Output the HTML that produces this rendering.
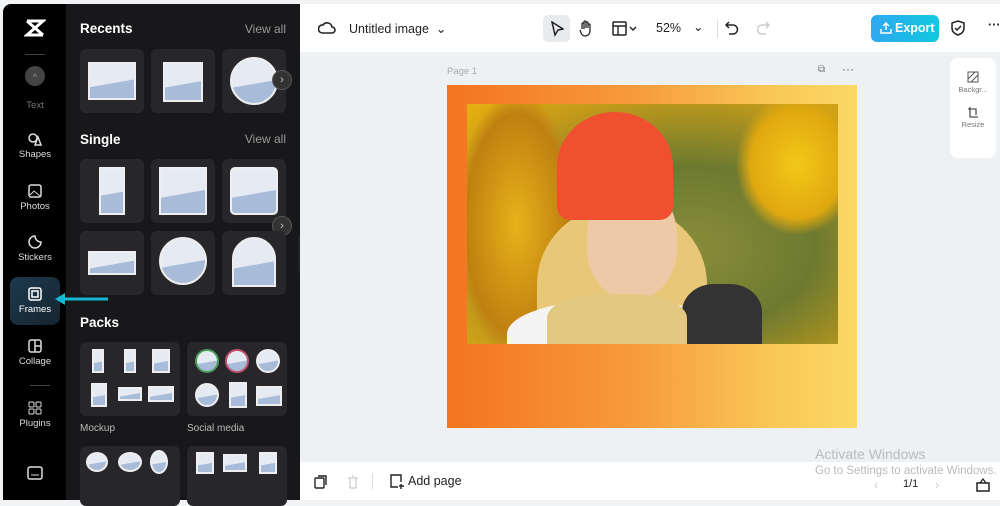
<!DOCTYPE html>
<html><head><meta charset="utf-8"><style>
*{box-sizing:border-box;margin:0;padding:0}
body{width:1000px;height:500px;overflow:hidden;background:#f2f3f5;font-family:"Liberation Sans",sans-serif;position:relative}
.rail{position:absolute;left:3px;top:4px;width:64px;height:496px;background:#000;border-radius:8px 0 0 0}
.panel{position:absolute;left:66px;top:4px;width:234px;height:496px;background:#18181b}
.ri{position:absolute;left:0;width:64px;text-align:center;color:#ddd;font-size:9.5px}
.ri svg{display:block;margin:0 auto 3px}
.h{position:absolute;left:14px;color:#fff;font-weight:bold;font-size:13.5px}
.va{position:absolute;right:14px;color:#999;font-size:12px}
.t{position:absolute;width:64px;height:64px;background:#27272b;border-radius:6px}
.img{position:absolute;background:linear-gradient(170deg,#e6ebf3 0 55%,#a8bcda 56%);border:2px solid #eee}
.arrow{position:absolute;left:55px;top:292px}
.main{position:absolute;left:300px;top:4px;width:700px;height:496px;background:#eef1f4}
.top{position:absolute;left:0;top:0;width:700px;height:48px;background:#fff}
.bot{position:absolute;left:0;top:458px;width:700px;height:38px;background:#fff}
.txt{position:absolute;font-size:12.5px;color:#222}
</style></head><body>
<div class="rail">
 <div class="ri" style="top:14px"><svg width="22" height="20" viewBox="0 0 22 20"><path d="M3 3h16L3 17h16M3 3l16 14" stroke="#fff" stroke-width="3" fill="none"/></svg></div>
 <div style="position:absolute;left:22px;top:50px;width:20px;height:1px;background:#444"></div>
 <div class="ri" style="top:62px"><div style="width:20px;height:20px;border-radius:50%;background:#444;margin:0 auto 14px;color:#999;font-size:9px;line-height:22px">^</div><span style="color:#777">Text</span></div>
 <div class="ri" style="top:128px"><svg width="14" height="14" viewBox="0 0 14 14"><circle cx="5" cy="6" r="4" stroke="#ddd" fill="none" stroke-width="1.5"/><path d="M7 13l3-8 3 8z" stroke="#ddd" fill="none" stroke-width="1.5"/></svg>Shapes</div>
 <div class="ri" style="top:180px"><svg width="14" height="14"><rect x="1" y="1" width="12" height="12" rx="2" stroke="#ddd" fill="none" stroke-width="1.5"/><path d="M2 11l4-4 6 5" stroke="#ddd" fill="none"/></svg>Photos</div>
 <div class="ri" style="top:231px"><svg width="14" height="14"><path d="M7 1a6 6 0 1 0 6 6A6 6 0 0 1 7 1z" stroke="#ddd" fill="none" stroke-width="1.5"/></svg>Stickers</div>
 <div style="position:absolute;left:7px;top:273px;width:50px;height:48px;border-radius:8px;background:linear-gradient(135deg,#1c3a4e,#17242e)"></div>
 <div class="ri" style="top:283px;color:#fff"><svg width="14" height="14"><rect x="1" y="1" width="12" height="12" rx="2" stroke="#fff" fill="none" stroke-width="1.5"/><rect x="4" y="4" width="6" height="6" stroke="#fff" fill="none" stroke-width="1.5"/></svg>Frames</div>
 <div class="ri" style="top:335px"><svg width="14" height="14"><rect x="1" y="1" width="12" height="12" rx="2" stroke="#ddd" fill="none" stroke-width="1.5"/><path d="M7 1v12M7 7h6" stroke="#ddd" stroke-width="1.5"/></svg>Collage</div>
 <div style="position:absolute;left:27px;top:381px;width:20px;height:1px;background:#444"></div>
 <div class="ri" style="top:397px"><svg width="14" height="14"><rect x="1" y="1" width="5" height="5" rx="1" stroke="#ddd" fill="none"/><rect x="8" y="1" width="5" height="5" rx="1" stroke="#ddd" fill="none"/><rect x="1" y="8" width="5" height="5" rx="1" stroke="#ddd" fill="none"/><rect x="8" y="8" width="5" height="5" rx="1" stroke="#ddd" fill="none"/></svg>Plugins</div>
 <div class="ri" style="top:462px"><svg width="16" height="14"><rect x="1" y="1" width="14" height="12" rx="2" stroke="#ddd" fill="none" stroke-width="1.5"/><path d="M4 9h8" stroke="#ddd"/></svg></div>
</div>
<svg class="arrow" width="55" height="14" style="z-index:5"><path d="M53 7H10" stroke="#14b8d4" stroke-width="3"/><path d="M0 7l10-6v12z" fill="#14b8d4"/></svg>
<div class="panel">
 <div class="h" style="top:17px">Recents</div><div class="va" style="top:18px">View all</div>
 <div class="t" style="left:14px;top:45px"><div class="img" style="left:8px;top:13px;width:48px;height:38px"></div></div>
 <div class="t" style="left:85px;top:45px"><div class="img" style="left:12px;top:13px;width:40px;height:40px"></div></div>
 <div class="t" style="left:156px;top:45px"><div class="img" style="left:8px;top:8px;width:48px;height:48px;border-radius:50%"></div></div>
 <div style="position:absolute;left:206px;top:66px;width:20px;height:20px;border-radius:50%;background:#333;border:1px solid #555;color:#ccc;font-size:11px;text-align:center;line-height:18px">›</div>
 <div class="h" style="top:128px">Single</div><div class="va" style="top:128px">View all</div>
 <div class="t" style="left:14px;top:155px"><div class="img" style="left:19px;top:8px;width:26px;height:48px"></div></div>
 <div class="t" style="left:85px;top:155px"><div class="img" style="left:8px;top:8px;width:48px;height:48px"></div></div>
 <div class="t" style="left:156px;top:155px"><div class="img" style="left:8px;top:8px;width:48px;height:48px;border-radius:5px"></div></div>
 <div style="position:absolute;left:206px;top:212px;width:20px;height:20px;border-radius:50%;background:#333;border:1px solid #555;color:#ccc;font-size:11px;text-align:center;line-height:18px">›</div>
 <div class="t" style="left:14px;top:227px"><div class="img" style="left:8px;top:20px;width:48px;height:24px"></div></div>
 <div class="t" style="left:85px;top:227px"><div class="img" style="left:8px;top:6px;width:48px;height:48px;border-radius:50%"></div></div>
 <div class="t" style="left:156px;top:227px"><div class="img" style="left:10px;top:6px;width:44px;height:50px;border-radius:22px 22px 0 0"></div></div>
 <div class="h" style="top:311px">Packs</div>
 <div class="t" style="left:14px;top:338px;width:100px;height:74px">
  <div class="img" style="left:12px;top:7px;width:12px;height:24px"></div><div class="img" style="left:44px;top:7px;width:12px;height:24px"></div><div class="img" style="left:72px;top:7px;width:18px;height:24px"></div>
  <div class="img" style="left:11px;top:41px;width:16px;height:24px"></div><div class="img" style="left:38px;top:45px;width:24px;height:14px"></div><div class="img" style="left:68px;top:44px;width:26px;height:16px"></div></div>
 <div class="t" style="left:121px;top:338px;width:100px;height:74px">
  <div class="img" style="left:8px;top:7px;width:24px;height:24px;border-radius:50%;border-color:#4a9a5a"></div><div class="img" style="left:38px;top:7px;width:24px;height:24px;border-radius:50%;border-color:#c4506a"></div><div class="img" style="left:69px;top:7px;width:24px;height:24px;border-radius:50%"></div>
  <div class="img" style="left:8px;top:41px;width:24px;height:24px;border-radius:50%"></div><div class="img" style="left:42px;top:40px;width:18px;height:26px"></div><div class="img" style="left:69px;top:44px;width:26px;height:20px"></div></div>
 <div style="position:absolute;left:14px;top:419px;color:#bbb;font-size:10px">Mockup</div>
 <div style="position:absolute;left:121px;top:419px;color:#bbb;font-size:10px">Social media</div>
 <div class="t" style="left:14px;top:442px;width:100px;height:60px">
  <div class="img" style="left:6px;top:6px;width:22px;height:20px;border-radius:50%"></div><div class="img" style="left:38px;top:6px;width:24px;height:20px;border-radius:50%"></div><div class="img" style="left:70px;top:4px;width:18px;height:24px;border-radius:50%"></div></div>
 <div class="t" style="left:121px;top:442px;width:100px;height:60px">
  <div class="img" style="left:9px;top:6px;width:18px;height:22px"></div><div class="img" style="left:36px;top:8px;width:24px;height:18px"></div><div class="img" style="left:72px;top:6px;width:18px;height:22px"></div></div>
</div>
<div style="position:absolute;left:298px;top:234px;width:8px;height:40px;background:#222;border-radius:4px"></div>
<div class="main">
 <div class="top">
  <svg style="position:absolute;left:18px;top:17px" width="18" height="16"><path d="M4 12a4 4 0 0 1 1-8 5 5 0 0 1 9 2 3 3 0 0 1 0 6z" stroke="#222" fill="none" stroke-width="1.6"/></svg>
  <div class="txt" style="left:49px;top:17px">Untitled image &nbsp;⌄</div>
  <div style="position:absolute;left:243px;top:11px;width:27px;height:27px;background:#e8eaed;border-radius:5px"></div>
  <svg style="position:absolute;left:250px;top:17px" width="14" height="16"><path d="M2 1l11 7-5 1-3 5z" stroke="#222" fill="none" stroke-width="1.5"/></svg>
  <svg style="position:absolute;left:279px;top:16px" width="14" height="17"><path d="M3 9V4a1 1 0 0 1 2 0v5M5 8V2a1 1 0 0 1 2 0v6M7 8V3a1 1 0 0 1 2 0v5M9 8V5a1 1 0 0 1 2 0v5c0 4-2 6-5 6-2 0-3-1-4-3L1 10" stroke="#222" fill="none" stroke-width="1.3"/></svg>
  <svg style="position:absolute;left:312px;top:17px" width="26" height="16"><rect x="1" y="1" width="13" height="13" rx="1" stroke="#222" fill="none" stroke-width="1.5"/><path d="M1 5h13M6 5v9M18 6l3 3 3-3" stroke="#222" fill="none" stroke-width="1.4"/></svg>
  <div class="txt" style="left:356px;top:17px">52%</div>
  <div class="txt" style="left:393px;top:15px">⌄</div>
  <div style="position:absolute;left:417px;top:16px;width:1px;height:18px;background:#ddd"></div>
  <svg style="position:absolute;left:425px;top:17px" width="14" height="15"><path d="M4 1L1 4l3 3M1 4h7a4 4 0 0 1 0 9H4" stroke="#222" fill="none" stroke-width="1.5"/></svg>
  <svg style="position:absolute;left:456px;top:17px" width="14" height="15"><path d="M10 1l3 3-3 3M13 4H6a4 4 0 0 0 0 9h4" stroke="#ccc" fill="none" stroke-width="1.5"/></svg>
  <div style="position:absolute;left:571px;top:11px;width:68px;height:27px;border-radius:6px;background:linear-gradient(90deg,#2ea8f0,#12c8df);color:#fff;font-weight:bold;font-size:12.5px;line-height:27px;padding-left:24px">Export</div>
  <svg style="position:absolute;left:580px;top:18px" width="12" height="12"><path d="M6 1v7M3 4l3-3 3 3M1 7v4h10V7" stroke="#fff" fill="none" stroke-width="1.4"/></svg>
  <svg style="position:absolute;left:651px;top:16px" width="14" height="17"><path d="M7 1l6 2v5c0 4-3 6-6 7-3-1-6-3-6-7V3z" stroke="#222" fill="none" stroke-width="1.5"/><path d="M4 8l2 2 4-4" stroke="#222" fill="none" stroke-width="1.5"/></svg>
  <div class="txt" style="left:688px;top:14px;font-weight:bold">···</div>
 </div>
 <div style="position:absolute;left:147px;top:62px;font-size:9.5px;color:#aaa">Page 1</div>
 <div style="position:absolute;left:518px;top:60px;font-size:10px;color:#777">⧉</div>
 <div style="position:absolute;left:542px;top:58px;font-size:12px;color:#555">···</div>
 <div style="position:absolute;left:147px;top:81px;width:410px;height:343px;background:linear-gradient(90deg,#f47420,#f79a3c 45%,#f9c858 80%,#fbd866)"></div>
 <div style="position:absolute;left:167px;top:100px;width:371px;height:240px;overflow:hidden;background:radial-gradient(ellipse at 60% 60%,#8a8d3a,#6c7a30 40%,#c29a1a 75%,#e8b010)">
  <div style="position:absolute;left:-10px;top:-10px;width:120px;height:260px;background:radial-gradient(ellipse,#e6b21a,#c08010 60%,transparent 72%)"></div>
  <div style="position:absolute;left:270px;top:-10px;width:120px;height:140px;background:radial-gradient(ellipse,#f2c818,#e0a810 55%,transparent 72%)"></div>
  <div style="position:absolute;left:70px;top:100px;width:170px;height:160px;border-radius:50% 50% 10% 10%;background:#e8c878"></div>
  <div style="position:absolute;left:40px;top:195px;width:220px;height:70px;border-radius:50% 50% 0 0;background:#f4f4f4"></div>
  <div style="position:absolute;left:215px;top:180px;width:80px;height:70px;border-radius:40% 40% 0 0;background:#333"></div>
  <div style="position:absolute;left:120px;top:80px;width:90px;height:115px;border-radius:45%;background:#eec9a8"></div>
  <div style="position:absolute;left:80px;top:190px;width:140px;height:60px;border-radius:40% 40% 0 0;background:#e2c880"></div>
  <div style="position:absolute;left:90px;top:8px;width:116px;height:108px;border-radius:50% 50% 12% 12%;background:#f05030"></div>
 </div>
 <div style="position:absolute;left:650px;top:54px;width:46px;height:100px;background:#fff;border-radius:8px;font-size:7.5px;color:#777;text-align:center">
  <svg style="margin-top:13px" width="12" height="12"><rect x="1" y="1" width="10" height="10" stroke="#555" fill="none"/><path d="M1 8l7-7M4 11l7-7" stroke="#555"/></svg><div>Backgr...</div>
  <svg style="margin-top:12px" width="12" height="12"><path d="M3 1v10h8M1 3h8v6" stroke="#555" fill="none" stroke-width="1.3"/></svg><div>Resize</div>
 </div>
 <div style="position:absolute;left:515px;top:442px;font-size:14px;color:#bbb">Activate Windows</div>
 <div class="bot">
  <svg style="position:absolute;left:14px;top:13px" width="14" height="14"><rect x="1" y="3" width="9" height="10" rx="1" stroke="#222" fill="none" stroke-width="1.4"/><path d="M4 1h8v9" stroke="#222" fill="none" stroke-width="1.4"/></svg>
  <svg style="position:absolute;left:47px;top:13px" width="12" height="14"><path d="M1 3h10M3 3v10h6V3M5 1h2" stroke="#ccc" fill="none" stroke-width="1.3"/></svg>
  <div style="position:absolute;left:72px;top:11px;width:1px;height:16px;background:#ddd"></div>
  <svg style="position:absolute;left:89px;top:12px" width="16" height="16"><path d="M9 13H2V1h10v7M12 10v5M10 12h5" stroke="#222" fill="none" stroke-width="1.4"/></svg>
  <div class="txt" style="left:108px;top:12px">Add page</div>
  <div style="position:absolute;left:515px;top:3px;font-size:11.5px;color:#bbb">Go to Settings to activate Windows.</div>
  <div class="txt" style="left:574px;top:16px;color:#ccc">‹</div>
  <div class="txt" style="left:603px;top:16px;font-size:11px">1/1</div>
  <div class="txt" style="left:635px;top:16px;color:#ccc">›</div>
  <svg style="position:absolute;left:676px;top:16px" width="14" height="14"><rect x="1" y="5" width="12" height="8" stroke="#222" fill="none" stroke-width="1.5"/><path d="M4 5l3-4 3 4" stroke="#222" fill="none" stroke-width="1.3"/></svg>
 </div>
</div>
</body></html>
